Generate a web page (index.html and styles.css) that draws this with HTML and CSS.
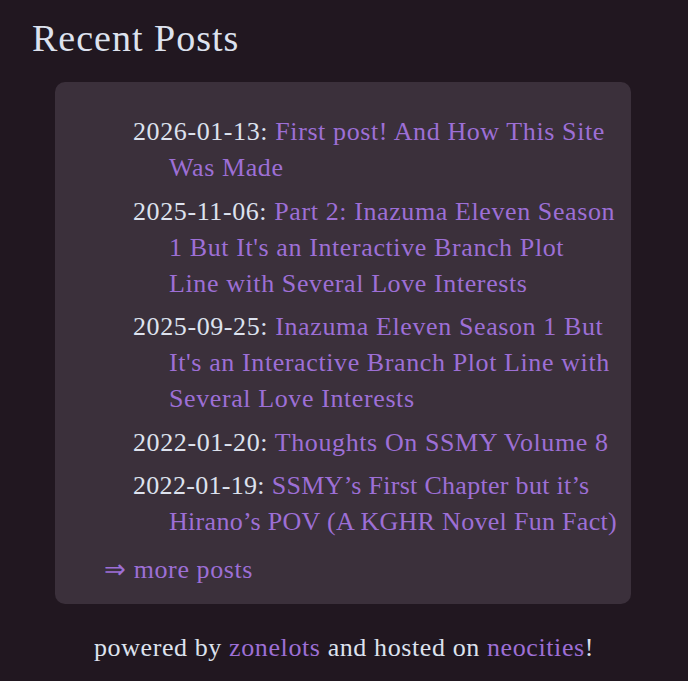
FILE: index.html
```html
<!DOCTYPE html>
<html>
<head>
<meta charset="utf-8">
<link rel="stylesheet" href="styles.css">
</head>
<body>
<h2 class="title">Recent Posts</h2>
<div class="card">
  <ul class="posts">
    <li>2026-01-13: <a href="#">First post! And How This Site Was Made</a></li>
    <li>2025-11-06: <a href="#">Part 2: Inazuma Eleven Season 1 But It's an Interactive Branch Plot Line with Several Love Interests</a></li>
    <li>2025-09-25: <a href="#">Inazuma Eleven Season 1 But It's an Interactive Branch Plot Line with Several Love Interests</a></li>
    <li>2022-01-20: <a href="#">Thoughts On SSMY Volume 8</a></li>
    <li class="tight">2022-01-19: <a href="#">SSMY’s First Chapter but it’s Hirano’s POV (A KGHR Novel Fun Fact)</a></li>
  </ul>
  <a class="more" href="#">⇒ more posts</a>
</div>
<p class="footer">powered by <a href="#">zonelots</a> and hosted on <a href="#">neocities</a>!</p>
</body>
</html>
```
FILE: styles.css
```css
html, body {
  margin: 0;
  padding: 0;
  background: #211720;
}
body {
  font-family: "Liberation Serif", "Times New Roman", serif;
  color: #dde2ee;
  font-size: 26px;
  letter-spacing: 0.6px;
}
a {
  color: #9d6fd6;
  text-decoration: none;
}
.title {
  margin: 0;
  padding: 18px 0 0 32px;
  font-weight: normal;
  font-size: 38px;
  letter-spacing: 1px;
  line-height: 40px;
}
.card {
  margin: 24px 0 0 55px;
  width: 514px;
  padding: 32px 13px 16px 49px;
  background: #3b303b;
  border-radius: 10px;
}
.posts {
  list-style: none;
  margin: 0;
  padding: 0 0 0 29px;
}
.posts li {
  line-height: 36px;
  padding-left: 36px;
  text-indent: -36px;
  margin-bottom: 7.5px;
}
.posts li.tight {
  letter-spacing: 0.3px;
}
.more {
  display: block;
  line-height: 36px;
  margin-top: 12px;
}
.footer {
  margin: 26px 0 0;
  text-align: center;
  line-height: 36px;
  font-size: 26px;
}
```
